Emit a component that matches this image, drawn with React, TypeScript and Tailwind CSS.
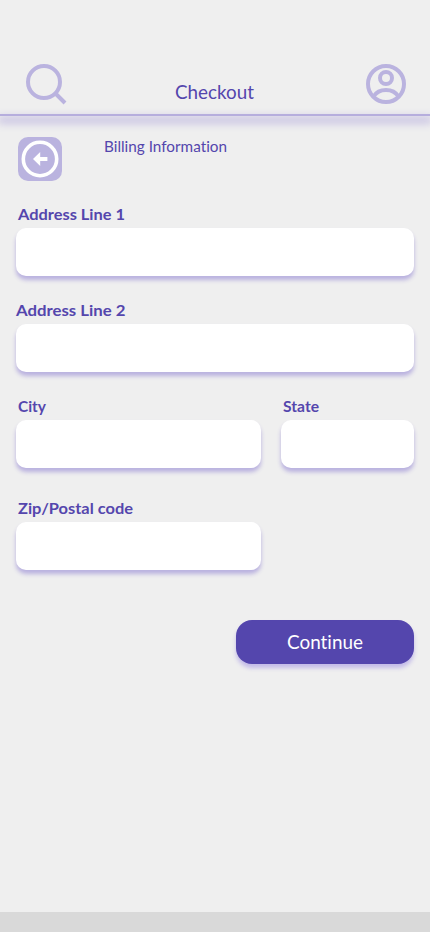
import { useState } from 'react';

type fieldType = {
  label: string;
  name: string;
  className?: string;
  labelClass?: string;
  textLength: number;
};

type fitTextType = {
  text: string;
  width: number;
  size: number;
  weight: number;
  color?: string;
};

// keeps each label at a fixed width whatever the font metrics are
function FitText({ text, width, size, weight, color = '#5446ad' }: fitTextType) {
  return (
    <svg
      width={width}
      height="24"
      className="block overflow-visible [font-variant-ligatures:none]"
      fill={color}
    >
      <text
        x="0"
        y="18"
        fontSize={size}
        fontWeight={weight}
        textLength={width}
        lengthAdjust="spacingAndGlyphs"
      >
        {text}
      </text>
    </svg>
  );
}

function Field({ label, name, className = '', labelClass = 'pl-[2px]', textLength }: fieldType) {
  const [value, setValue] = useState('');
  return (
    <label className={`block ${className}`}>
      <span className={`-mt-[2px] mb-[2px] block h-6 ${labelClass}`}>
        <FitText text={label} width={textLength} size={16} weight={700} />
      </span>
      <input
        name={name}
        value={value}
        onChange={(e) => setValue(e.target.value)}
        className="block h-12 w-full rounded-[10px] bg-white px-3 text-[#5446ad] shadow-[0_4px_4px_#b9b1df] outline-none"
      />
    </label>
  );
}

function SearchIcon() {
  return (
    <svg width="42" height="42" viewBox="0 0 42 42" fill="none" stroke="#bab3df" strokeWidth="4">
      <circle cx="19" cy="19" r="16" />
      <path d="M30 30l10 10" />
    </svg>
  );
}

function ProfileIcon() {
  return (
    <svg width="40" height="40" viewBox="0 0 40 40" fill="none" stroke="#bab3df" strokeWidth="4">
      <circle cx="20" cy="20" r="18" />
      <circle cx="20" cy="14" r="6" />
      <path d="M7.5 32.5C10 28.5 14.5 26 20 26s10 2.5 12.5 6.5" />
    </svg>
  );
}

function BackIcon() {
  return (
    <svg width="44" height="44" viewBox="0 0 44 44" fill="none">
      <circle cx="22" cy="22" r="16.7" stroke="#fff" strokeWidth="3.6" />
      <path d="M15 22l7.2-7v5h7.2v4h-7.2v5z" fill="#fff" />
    </svg>
  );
}

export default function App() {
  return (
    <div className="flex h-[932px] w-full flex-col overflow-hidden bg-[#efefef] font-['Lato',sans-serif]">
      <header className="flex h-[114px] shrink-0 justify-between pl-[25px] pr-6 pt-16">
        <button aria-label="Search" className="-mt-px h-[42px]">
          <SearchIcon />
        </button>
        <h1 className="mt-[17px] mr-[4px]">
          <FitText text="Checkout" width={79} size={20} weight={400} />
        </h1>
        <button aria-label="Profile" className="h-10">
          <ProfileIcon />
        </button>
      </header>
      <div className="h-[2px] shrink-0 bg-[#b6aedd] shadow-[0_5px_8px_2px_#bfb8e0]" />

      <main className="flex-1 px-4 pt-[21px]">
        <div className="flex h-[67px] items-start pl-[2px]">
          <button aria-label="Back" className="h-11 w-11 rounded-[10px] bg-[#bab3df]">
            <BackIcon />
          </button>
          <h2 className="ml-[42px] -mt-[3px]">
            <FitText text="Billing Information" width={123} size={16} weight={400} />
          </h2>
        </div>

        <form onSubmit={(e) => e.preventDefault()}>
          <Field label="Address Line 1" name="address1" textLength={107} className="flow-root" />
          <Field
            label="Address Line 2"
            name="address2"
            textLength={109.5}
            labelClass=""
            className="mt-6 flow-root"
          />
          <div className="mt-6 flex gap-5">
            <Field label="City" name="city" textLength={28} className="flow-root w-[245px]" />
            <Field label="State" name="state" textLength={36} className="flow-root w-[133px]" />
          </div>
          <Field
            label="Zip/Postal code"
            name="zip"
            textLength={115}
            className="mt-[30px] flow-root w-[245px]"
          />
          <button
            type="submit"
            className="mt-[50px] ml-auto flex h-11 w-[178px] items-center justify-center rounded-2xl bg-[#5446ad] pt-[2px] shadow-[0_4px_4px_#c3bbe8]"
          >
            <FitText text="Continue" width={76} size={20} weight={400} color="#ffffff" />
          </button>
        </form>
      </main>

      <footer className="h-5 shrink-0 bg-[#d9d9d9]" />
    </div>
  );
}
